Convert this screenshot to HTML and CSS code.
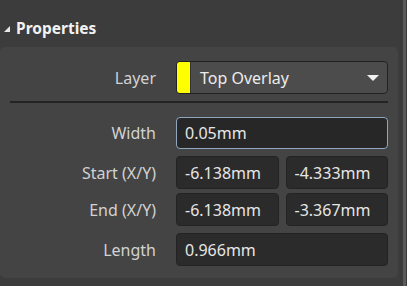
FILE: index.html
```html
<!DOCTYPE html>
<html lang="en">
  <head>
    <title>Properties</title>
    <link rel="stylesheet" href="styles.css">
  </head>
  <body>
    <div class="pane">
      <div class="pane-body">
        <h2 class="section-title"><span class="caret"></span>Properties</h2>
        <div class="panel">
          <div class="row layer-row">
            <label class="label">Layer</label>
            <div class="dropdown">
              <span class="swatch"></span>
              <span class="dropdown-text">Top Overlay</span>
              <span class="arrow"></span>
            </div>
          </div>
          <hr class="divider">
          <div class="row">
            <label class="label">Width</label>
            <div class="field focused">0.05mm</div>
          </div>
          <div class="row">
            <label class="label">Start (X/Y)</label>
            <div class="pair">
              <div class="field">-6.138mm</div>
              <div class="field">-4.333mm</div>
            </div>
          </div>
          <div class="row tight">
            <label class="label">End (X/Y)</label>
            <div class="pair">
              <div class="field">-6.138mm</div>
              <div class="field">-3.367mm</div>
            </div>
          </div>
          <div class="row">
            <label class="label">Length</label>
            <div class="field">0.966mm</div>
          </div>
        </div>
      </div>
      <div class="scrollbar"></div>
    </div>
  </body>
</html>
```

FILE: styles.css
```css
body {
    margin: 0;
    background-color: #3c3c3c;
    font-family: "Noto Sans", "Open Sans", sans-serif;
    color: #d4d4d4;
  }

  .pane {
    display: flex;
    height: 286px;
  }

  .pane-body {
    width: 398px;
  }

  .scrollbar {
    width: 3px;
    margin-left: 5px;
    background-color: #5a5a5a;
  }

  .section-title {
    display: flex;
    align-items: center;
    margin: 0;
    height: 47px;
    padding: 8px 0 0 4px;
    box-sizing: border-box;
    font-size: 15.5px;
    font-weight: bold;
    color: #f2f2f2;
  }

  .caret {
    width: 0;
    height: 0;
    margin-right: 6px;
    margin-top: 2px;
    border-left: 6px solid transparent;
    border-bottom: 6px solid #e8e8e8;
  }

  .panel {
    background-color: #444444;
    border-radius: 5px;
    padding: 14px 10px 14px 0;
    height: 231px;
    box-sizing: border-box;
  }

  .row {
    display: grid;
    grid-template-columns: 156px 1fr;
    column-gap: 20px;
    align-items: center;
    margin-bottom: 7px;
  }

  .row.tight {
    margin-top: -3px;
  }

  .label {
    text-align: right;
    font-size: 16px;
    color: #d2d2d2;
  }

  .dropdown {
    display: flex;
    align-items: center;
    height: 33px;
    box-sizing: border-box;
    background-color: #4c4c4c;
    border: 1px solid #222;
    border-radius: 4px;
    overflow: hidden;
  }

  .swatch {
    width: 13px;
    height: 100%;
    background-color: #ffff00;
    border-right: 1px solid #333;
  }

  .dropdown-text {
    flex: 1;
    padding-left: 9px;
    font-size: 16px;
    color: #ececec;
  }

  .arrow {
    width: 0;
    height: 0;
    margin-right: 8px;
    border-left: 6px solid transparent;
    border-right: 6px solid transparent;
    border-top: 6px solid #f0f0f0;
  }

  .divider {
    border: none;
    border-top: 2px solid #232323;
    margin: 6px 0 14px 10px;
  }

  .pair {
    display: grid;
    grid-template-columns: 1fr 1fr;
    column-gap: 7px;
  }

  .field {
    height: 33px;
    box-sizing: border-box;
    display: flex;
    align-items: center;
    padding-left: 8px;
    background-color: #2b2b2b;
    border: 1px solid #232323;
    border-radius: 4px;
    font-size: 16px;
    color: #e6e6e6;
  }

  .field.focused {
    height: 32px;
    border-color: #8fa6bf;
    background-color: #272727;
  }
```
